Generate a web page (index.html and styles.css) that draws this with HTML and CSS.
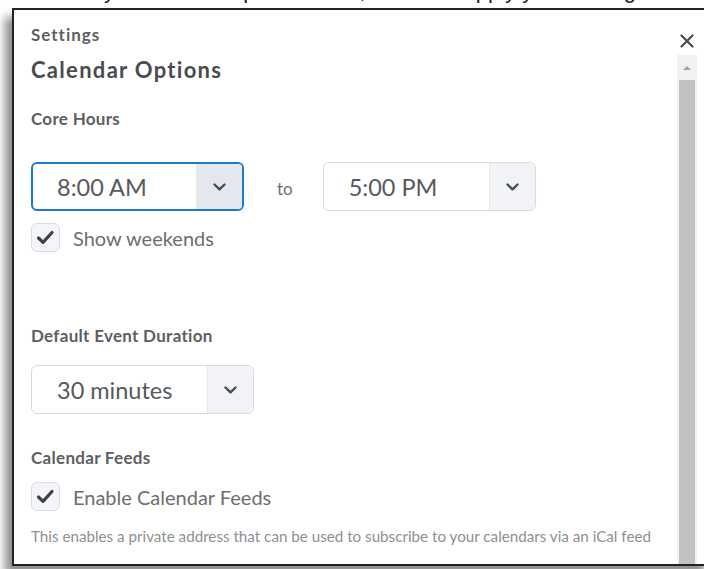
FILE: index.html
```html
<!DOCTYPE html>
<html lang="en">
<head>
<meta charset="utf-8">
<title>Calendar Options</title>
<link rel="stylesheet" href="styles.css">
</head>
<body>
  <p class="lead-in"><span>Choose your calendar preferences, and then apply your settings to the display of every page you open, typing your options.</span></p>

  <div class="dialog" role="dialog" aria-labelledby="dialog-title">
    <header class="dialog-header">
      <div class="dialog-kicker">Settings</div>
      <button class="close-btn" type="button" aria-label="Close">
        <svg width="14" height="14" viewBox="0 0 14 14" aria-hidden="true">
          <path d="M1.5 1.5 L12.5 12.5 M12.5 1.5 L1.5 12.5" stroke="#494c4e" stroke-width="2.2" stroke-linecap="round" fill="none"/>
        </svg>
      </button>
    </header>

    <div class="dialog-body">
      <div class="dialog-content">
        <h2 class="dialog-title" id="dialog-title">Calendar Options</h2>

        <h3 class="field-label field-label--hours">Core Hours</h3>
        <div class="hours-row">
          <div class="select is-focused">
            <span class="select-value">8:00 AM</span>
            <span class="select-btn">
              <svg width="13" height="8" viewBox="0 0 13 8" aria-hidden="true"><path d="M1.5 1.5 L6.5 6.3 L11.5 1.5" stroke="#494c4e" stroke-width="2.4" stroke-linecap="round" stroke-linejoin="round" fill="none"/></svg>
            </span>
          </div>
          <span class="range-sep">to</span>
          <div class="select">
            <span class="select-value">5:00 PM</span>
            <span class="select-btn">
              <svg width="13" height="8" viewBox="0 0 13 8" aria-hidden="true"><path d="M1.5 1.5 L6.5 6.3 L11.5 1.5" stroke="#494c4e" stroke-width="2.4" stroke-linecap="round" stroke-linejoin="round" fill="none"/></svg>
            </span>
          </div>
        </div>
        <label class="checkbox-row">
          <span class="checkbox">
            <svg width="27" height="27" viewBox="0 0 27 27" aria-hidden="true"><path d="M6.5 14 L11 18.3 L20 8.5" stroke="#3f4244" stroke-width="3.2" stroke-linecap="round" stroke-linejoin="round" fill="none"/></svg>
          </span>
          <span class="checkbox-text">Show weekends</span>
        </label>

        <h3 class="field-label field-label--duration">Default Event Duration</h3>
        <div class="select select--wide">
          <span class="select-value">30 minutes</span>
          <span class="select-btn">
            <svg width="13" height="8" viewBox="0 0 13 8" aria-hidden="true"><path d="M1.5 1.5 L6.5 6.3 L11.5 1.5" stroke="#494c4e" stroke-width="2.4" stroke-linecap="round" stroke-linejoin="round" fill="none"/></svg>
          </span>
        </div>

        <h3 class="field-label field-label--feeds">Calendar Feeds</h3>
        <label class="checkbox-row checkbox-row--feeds">
          <span class="checkbox">
            <svg width="27" height="27" viewBox="0 0 27 27" aria-hidden="true"><path d="M6.5 14 L11 18.3 L20 8.5" stroke="#3f4244" stroke-width="3.2" stroke-linecap="round" stroke-linejoin="round" fill="none"/></svg>
          </span>
          <span class="checkbox-text">Enable Calendar Feeds</span>
        </label>
        <p class="help-text">This enables a private address that can be used to subscribe to your calendars via an iCal feed</p>
      </div>

      <div class="scrollbar" aria-hidden="true">
        <div class="scroll-up"><span class="scroll-arrow"></span></div>
        <div class="scroll-thumb"></div>
      </div>
    </div>
  </div>
</body>
</html>
```

FILE: styles.css
```css
* {
  box-sizing: border-box;
}

html,
body {
  margin: 0;
  padding: 0;
}

body {
  width: 704px;
  height: 569px;
  overflow: hidden;
  background: #ffffff;
  font-family: Lato, "Noto Sans", sans-serif;
  color: #565a5c;
}

/* line of page text that runs under the top of the dialog */
.lead-in {
  margin: 0;
  height: 8px;
  overflow: hidden;
  font-family: "Liberation Sans", Arial, sans-serif;
  font-size: 22px;
  line-height: 22px;
  color: #1b1b1b;
  white-space: nowrap;
}

.lead-in span {
  display: block;
  padding-left: 22px;
  transform: translateY(-20px);
}

/* dialog frame */
.dialog {
  margin-left: 12px;
  width: 700px;
  height: 558px;
  border: 2px solid #222222;
  background: #ffffff;
  box-shadow: -7px 9px 9px rgba(0, 0, 0, 0.45);
  display: flex;
  flex-direction: column;
}

.dialog-header {
  height: 45px;
  flex: none;
  display: flex;
  justify-content: space-between;
  align-items: flex-start;
  padding: 15px 0 0 17px;
}

.dialog-kicker {
  font-size: 17px;
  font-weight: 700;
  line-height: 20px;
  letter-spacing: 1px;
  color: #5b5f62;
}

.close-btn {
  margin: 9px 16px 0 0;
  padding: 0;
  border: 0;
  background: none;
  width: 14px;
  height: 14px;
  display: flex;
}

.dialog-body {
  flex: 1;
  min-height: 0;
  display: flex;
}

.dialog-content {
  flex: 1;
  padding-left: 17px;
}

.dialog-title {
  margin: 2px 0 0;
  font-size: 22px;
  font-weight: 700;
  line-height: 26px;
  letter-spacing: 1.3px;
  color: #494c4e;
}

.field-label {
  margin: 0;
  font-size: 17px;
  font-weight: 700;
  line-height: 20px;
  letter-spacing: 0.3px;
  color: #5b5f62;
}

.field-label--hours {
  margin-top: 26px;
}

.field-label--duration {
  margin-top: 74px;
}

.field-label--feeds {
  margin-top: 34px;
}

/* selects */
.hours-row {
  margin-top: 33px;
  display: flex;
  align-items: center;
}

.select {
  width: 213px;
  height: 49px;
  border: 1px solid #d6dbe3;
  border-radius: 6px;
  display: flex;
  overflow: hidden;
  background: #ffffff;
}

.select.is-focused {
  border: 2px solid #1f7ac6;
}

.select--wide {
  width: 223px;
  margin-top: 19px;
}

.select-value {
  flex: 1;
  display: flex;
  align-items: center;
  padding-left: 25px;
  font-size: 23.5px;
  color: #565a5c;
}

.select.is-focused .select-value {
  padding-left: 24px;
}

.select-btn {
  width: 46px;
  flex: none;
  display: flex;
  align-items: center;
  justify-content: center;
  background: #f1f3f6;
  border-left: 1px solid #e6e9ee;
}

.select.is-focused .select-btn {
  background: #e4e8ee;
}

.range-sep {
  margin: 0 30px 0 33px;
  font-size: 17px;
  padding-top: 4px;
  color: #6b6f72;
}

/* checkboxes */
.checkbox-row {
  margin-top: 12px;
  display: flex;
  align-items: center;
  gap: 13px;
}

.checkbox-row--feeds {
  margin-top: 14px;
}

.checkbox {
  width: 29px;
  height: 29px;
  flex: none;
  border: 1px solid #d8dde5;
  border-radius: 6px;
  background: #f3f5f8;
  display: flex;
}

.checkbox-text {
  font-size: 20px;
  color: #6b6f72;
}

.help-text {
  margin: 16px 0 0;
  font-size: 15.2px;
  line-height: 18px;
  color: #8c9094;
}

/* scrollbar */
.scrollbar {
  width: 20px;
  margin-right: 13px;
  flex: none;
  display: flex;
  flex-direction: column;
  background: #f1f1f1;
}

.scroll-up {
  height: 25px;
  flex: none;
  display: flex;
  align-items: center;
  justify-content: center;
}

.scroll-arrow {
  width: 0;
  height: 0;
  border-left: 4px solid transparent;
  border-right: 4px solid transparent;
  border-bottom: 4px solid #a3a3a3;
}

.scroll-thumb {
  flex: 1;
  margin: 0 2px;
  background: #c1c1c1;
}
```
